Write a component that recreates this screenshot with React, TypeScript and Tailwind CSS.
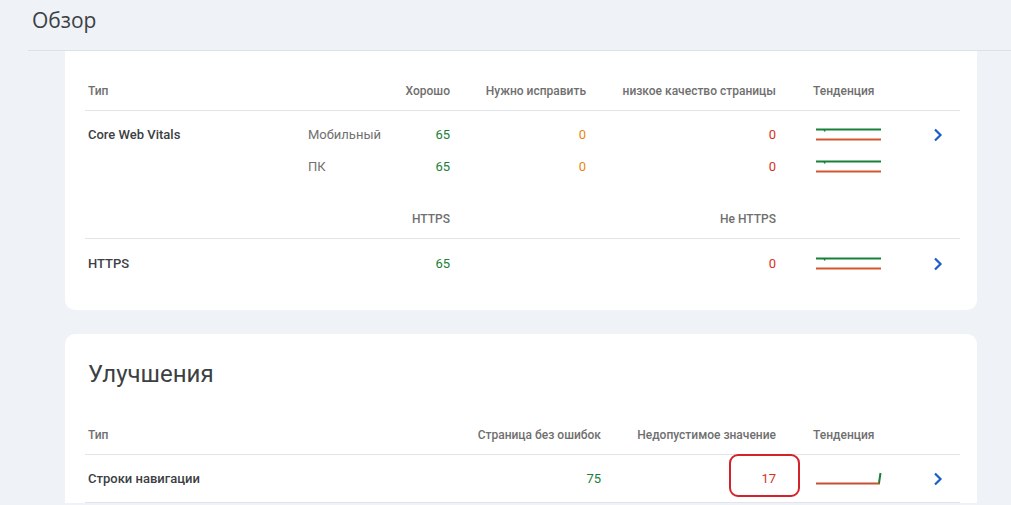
import React from 'react';

const font = { fontFamily: 'Roboto, "Noto Sans", sans-serif' };

// Small trend chart drawn as svg lines
const Trend = ({ flat = true }: { flat?: boolean }) =>
  flat ? (
    <svg width="66" height="14" viewBox="0 0 66 14" className="block">
      <line x1="0" y1="1.5" x2="65" y2="1.5" stroke="#188038" strokeWidth="2" />
      <line x1="8" y1="1.5" x2="9" y2="3.5" stroke="#188038" strokeWidth="1.5" />
      <line x1="0" y1="11.5" x2="65" y2="11.5" stroke="#d3562f" strokeWidth="2" />
    </svg>
  ) : (
    <svg width="66" height="16" viewBox="0 0 66 16" className="block">
      <line x1="0" y1="12.5" x2="64" y2="12.5" stroke="#c8502e" strokeWidth="2" />
      <line x1="63" y1="12" x2="64.5" y2="2" stroke="#188038" strokeWidth="2" />
    </svg>
  );

const Chevron = () => (
  <svg width="10" height="14" viewBox="0 0 10 14" className="block">
    <path d="M2 1.5 L7.5 7 L2 12.5" fill="none" stroke="#1a5fc8" strokeWidth="2.2" />
  </svg>
);

const cols1 = 'grid grid-cols-[215px_90px_68px_136px_190px_121px_1fr] items-center';
const cols2 = 'grid grid-cols-[375px_149px_175px_121px_1fr] items-center';
const head = 'text-[12px] font-medium text-[#6f6f6f]';

export default function App() {
  return (
    <div className="h-[505px] overflow-hidden bg-[#eff2f7]" style={font}>
      {/* Top bar */}
      <div className="flex h-[50px] items-center pl-8">
        <h1 className="text-[21px] text-[#3c4043] -mt-2" style={{ fontFamily: '"Open Sans", Roboto, sans-serif' }}>
          Обзор
        </h1>
      </div>
      <div className="ml-7 border-t border-[#dde0e4]" />

      <div className="pl-[65px] pr-[34px]">
        {/* Card 1 */}
        <div className="rounded-b-[10px] bg-white pl-5 pr-[17px] pt-5 pb-[22px]">
          <div className={`${cols1} h-10 border-b border-[#e2e4e7]`}>
            <div className={`${head} pl-[3px] text-[#5f6368]`}>Тип</div>
            <div />
            <div className={`${head} pr-2 text-right`}>Хорошо</div>
            <div className={`${head} pr-2 text-right`}>Нужно исправить</div>
            <div className={`${head} pr-2 text-right`}>низкое качество страницы</div>
            <div className={`${head} pl-[29px]`}>Тенденция</div>
            <div />
          </div>

          <div className="py-2">
            <div className={`${cols1} h-8`}>
              <div className="pl-[3px] text-[13px] font-medium text-[#3c4043]">Core Web Vitals</div>
              <div className="pl-2 text-[13px] text-[#707070]">Мобильный</div>
              <div className="pr-2 text-right text-[13px] text-[#188038]">65</div>
              <div className="pr-2 text-right text-[13px] text-[#e8860c]">0</div>
              <div className="pr-2 text-right text-[13px] text-[#d93025]">0</div>
              <div className="pl-8"><Trend /></div>
              <div className="pl-7"><Chevron /></div>
            </div>
            <div className={`${cols1} h-8`}>
              <div />
              <div className="pl-2 text-[13px] text-[#707070]">ПК</div>
              <div className="pr-2 text-right text-[13px] text-[#188038]">65</div>
              <div className="pr-2 text-right text-[13px] text-[#e8860c]">0</div>
              <div className="pr-2 text-right text-[13px] text-[#d93025]">0</div>
              <div className="pl-8"><Trend /></div>
              <div />
            </div>
          </div>

          <div className={`${cols1} mt-2 h-10 border-b border-[#e2e4e7]`}>
            <div />
            <div />
            <div className={`${head} pr-2 text-right`}>HTTPS</div>
            <div />
            <div className={`${head} pr-2 text-right`}>Не HTTPS</div>
            <div />
            <div />
          </div>
          <div className={`${cols1} h-[49px]`}>
            <div className="pl-[3px] text-[13px] font-medium text-[#3c4043]">HTTPS</div>
            <div />
            <div className="pr-2 text-right text-[13px] text-[#188038]">65</div>
            <div />
            <div className="pr-2 text-right text-[13px] text-[#d93025]">0</div>
            <div className="pl-8"><Trend /></div>
            <div className="pl-7"><Chevron /></div>
          </div>
        </div>

        {/* Card 2 */}
        <div className="mt-6 rounded-t-[10px] bg-white pl-5 pr-[17px] pt-[26px]">
          <h2 className="pl-[3px] text-[24px] leading-7 text-[#3c4043]">Улучшения</h2>
          <div className={`${cols2} mt-[27px] h-10 border-b border-[#e2e4e7]`}>
            <div className={`${head} pl-[3px] text-[#5f6368]`}>Тип</div>
            <div className={`${head} pr-2 text-right`}>Страница без ошибок</div>
            <div className={`${head} pr-2 text-right`}>Недопустимое значение</div>
            <div className={`${head} pl-[29px]`}>Тенденция</div>
            <div />
          </div>
          <div className={`${cols2} h-12 border-b border-[#e2e4e7]`}>
            <div className="pl-[3px] text-[13px] font-medium text-[#3c4043]">Строки навигации</div>
            <div className="pr-2 text-right text-[13px] text-[#188038]">75</div>
            <div className="relative pr-2 text-right text-[13px] text-[#d93025]">
              17
              <div className="absolute right-[-16px] top-[-15px] h-[43px] w-[71px] rounded-[9px] border-2 border-[#d3222a]" />
            </div>
            <div className="pl-8"><Trend flat={false} /></div>
            <div className="pl-7"><Chevron /></div>
          </div>
        </div>
      </div>
    </div>
  );
}
